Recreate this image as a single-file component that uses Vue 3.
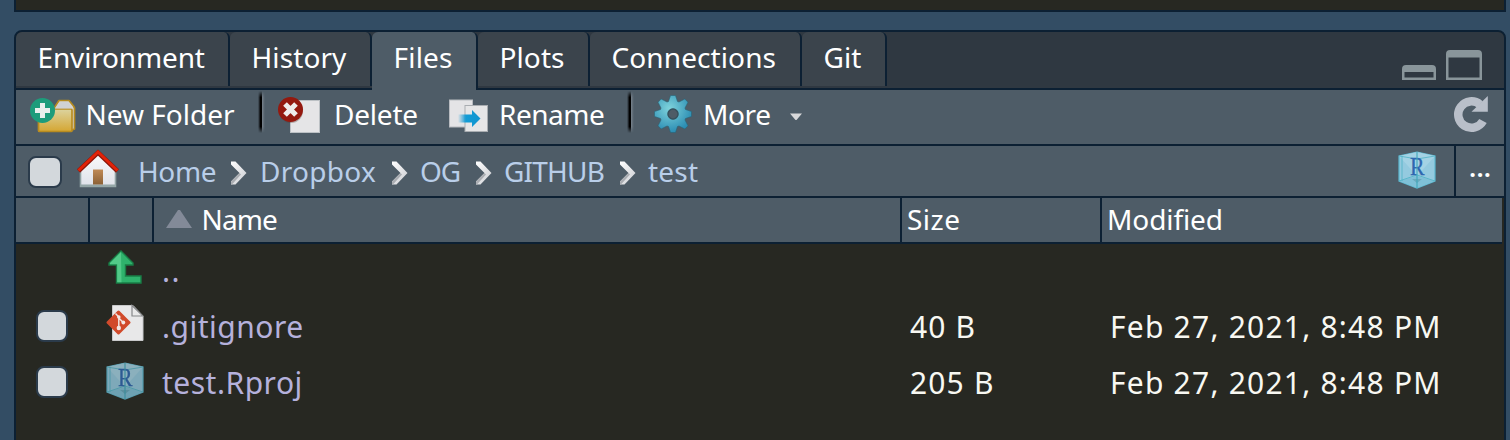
<script setup>
const tabs = [
  { label: 'Environment', cls: 't-env' },
  { label: 'History', cls: 't-history' },
  { label: 'Files', cls: 't-files active' },
  { label: 'Plots', cls: 't-plots' },
  { label: 'Connections', cls: 't-conn' },
  { label: 'Git', cls: 't-git' },
]
const crumbs = [
  { label: 'Home', cls: 'c-home' },
  { label: 'Dropbox', cls: 'c-dropbox' },
  { label: 'OG', cls: 'c-og' },
  { label: 'GITHUB', cls: 'c-github' },
  { label: 'test', cls: 'c-test' },
]
const rows = [
  { icon: 'up', name: '..', size: '', modified: '' },
  { icon: 'git', name: '.gitignore', size: '40 B', modified: 'Feb 27, 2021, 8:48 PM' },
  { icon: 'rproj', name: 'test.Rproj', size: '205 B', modified: 'Feb 27, 2021, 8:48 PM' },
]
</script>

<template>
  <div class="screen">
    <svg class="defs" width="0" height="0">
      <defs>
        <linearGradient id="folder" x1="0" y1="0" x2="0" y2="1"><stop offset="0" stop-color="#dcd4a0" /><stop offset="1" stop-color="#d5a632" /></linearGradient>
        <linearGradient id="move" x1="0" y1="0" x2="1" y2="0"><stop offset="0" stop-color="#1b9bd4" stop-opacity="0" /><stop offset=".35" stop-color="#149cd5" /><stop offset="1" stop-color="#1094cf" /></linearGradient>
        <radialGradient id="gear" cx=".4" cy=".35" r=".65"><stop offset="0" stop-color="#7fd3dc" /><stop offset="1" stop-color="#2b8db3" /></radialGradient>
        <linearGradient id="wall" x1="0" y1="0" x2="0" y2="1"><stop offset="0" stop-color="#fafafa" /><stop offset="1" stop-color="#dfe2ea" /></linearGradient>
        <linearGradient id="door" x1="0" y1="0" x2="0" y2="1"><stop offset="0" stop-color="#c08a56" /><stop offset="1" stop-color="#8b6136" /></linearGradient>
        <linearGradient id="chev" x1="0" y1="0" x2="1" y2="1"><stop offset="0" stop-color="#ffffff" /><stop offset="1" stop-color="#c9cbd0" /></linearGradient>
        <symbol id="cube" viewBox="0 0 38 38">
          <path d="M19 1 37 5V30L19 37 1 30V5Z" fill="#94cadf" stroke="#5cb8d0" stroke-width="1.2" />
          <path d="M19 1 37 5 19 25 1 5Z" fill="#a4d2e4" />
          <path d="M1 30 19 25 37 30 19 37Z" fill="#7fc0d7" />
          <path d="M1 5 19 8 37 5M1 30 19 24 37 30M4 5V30" fill="none" stroke="#4eb3c5" stroke-width=".8" />
          <path d="M14 28h10l-5 4Z" fill="#6aa9bd" />
          <text x="19.2" y="23.500" text-anchor="middle" font-family="Liberation Serif, serif" font-size="25" textLength="14.500" lengthAdjust="spacingAndGlyphs" fill="#2f67b0" stroke="#2f67b0" stroke-width=".3">R</text>
          <path d="M19 1V37" stroke="#3fa8bb" stroke-width="1.100" />
        </symbol>
      </defs>
    </svg>

    <div class="upper-pane"></div>

    <div class="pane">
      <div class="tabbar">
        <div v-for="t in tabs" :key="t.label" class="tab" :class="t.cls"><span>{{ t.label }}</span></div>
        <div class="window-controls">
          <svg width="34" height="30" viewBox="0 0 34 30"><path fill-rule="evenodd" fill="#89959a" d="M0 30V19q0-4 4-4H30q4 0 4 4V30ZM2.500 22V27.500H31.500V22Z" /></svg>
          <svg width="36" height="30" viewBox="0 0 36 30"><path fill-rule="evenodd" fill="#89959a" d="M0 30V4q0-4 4-4H32q4 0 4 4V30ZM2.500 7.500V27.500H33.500V7.500Z" /></svg>
        </div>
      </div>

      <div class="toolbar">
        <svg class="i-new" width="48" height="38" viewBox="0 0 48 38">
          <path d="M23.500 12 29 3.500h10l4.500 5.500 1 2V32l-2.500 1H24Z" fill="#d6d6d4" stroke="#b58b20" stroke-width="1.700" stroke-linejoin="round" />
          <rect x="8.500" y="12" width="33.500" height="22.500" rx="1" fill="url(#folder)" stroke="#b98c20" stroke-width="1.700" />
          <path d="M25 11.500 29.500 5h9l3.500 6.500Z" fill="#d0d1d3" />
          <circle cx="12.500" cy="13.500" r="12.500" fill="#1d9c7b" />
          <path d="M10 6h5v5h5v5h-5v5h-5v-5h-5v-5h5Z" fill="#e9efec" />
        </svg>
        <span class="l-new">New Folder</span>
        <i class="sep"></i>
        <svg class="i-del" width="46" height="38" viewBox="0 0 46 38">
          <rect x="13.500" y="4.500" width="29" height="32" fill="#e5e5e7" stroke="#bcc1c5" />
          <circle cx="14" cy="15" r="12" fill="#50352f" opacity=".35" />
          <circle cx="13.500" cy="13.500" r="12.500" fill="#94190f" />
          <path d="M8 8 19 19M19 8 8 19" stroke="#eeeceb" stroke-width="5.200" />
        </svg>
        <span class="l-del">Delete</span>
        <svg class="i-ren" width="42" height="38" viewBox="0 0 42 38">
          <rect x="1.500" y="4" width="23" height="27" fill="#e4e4e6" stroke="#b8bbc0" />
          <rect x="17" y="9.500" width="22.500" height="26" fill="#e6e6e7" stroke="#a9adb1" />
          <path d="M10 18.500H24V14l8.500 8.500-8.500 8.500v-4.500H10Z" fill="url(#move)" />
        </svg>
        <span class="l-ren">Rename</span>
        <i class="sep sep2"></i>
        <svg class="i-gear" width="40" height="40" viewBox="-20 -20 40 40">
          <path fill="url(#gear)" stroke="#2a6376" stroke-width=".6" fill-rule="evenodd" d="M-4.500-12.500-2.500-18.500H2.500L4.500-12.500 6-12 11.800-15 15-11.800 12-6 12.500-4.500 18.500-2.500V2.500L12.500 4.500 12 6 15 11.800 11.800 15 6 12 4.500 12.500 2.500 18.500H-2.500L-4.500 12.500-6 12-11.800 15-15 11.800-12 6-12.500 4.500-18.500 2.500V-2.500L-12.500-4.500-12-6-15-11.800-11.800-15-6-12ZM5 0A5 5 0 1 0-5 0 5 5 0 1 0 5 0Z" />
          <circle r="5" fill="none" stroke="#38515d" stroke-width="1.400" />
        </svg>
        <span class="l-more">More</span>
        <svg class="i-caret" width="14" height="8" viewBox="0 0 14 8"><path d="M1 .5H13L7.500 7h-1Z" fill="#d8d8da" /></svg>
        <svg class="i-refresh" width="36" height="38" viewBox="0 0 36 38">
          <path d="M30 26A13.200 13.200 0 1 1 27 9.500" fill="none" stroke="#b9bfc9" stroke-width="8.500" />
          <path d="M18.500 16.800 34.800 1V16.800Z" fill="#b9bfc9" />
        </svg>
      </div>

      <div class="pathbar">
        <i class="check check-all"></i>
        <svg class="i-home" width="44" height="40" viewBox="0 0 44 40">
          <path d="M4.500 21 22 4.500 39.500 21V37.500H4.500Z" fill="url(#wall)" />
          <path d="M4.500 20V37.500H39.500V20" fill="none" stroke="#92a3a5" stroke-width="1.600" />
          <path d="M4 36.700H40" stroke="#94a6a7" stroke-width="2.500" />
          <rect x="17" y="20.500" width="10" height="15" fill="url(#door)" />
          <path d="M2.500 22 22 3.500 41.500 22" fill="none" stroke="#8b170b" stroke-width="4.500" />
          <path d="M2.500 21.500 22 3 41.500 21.500" fill="none" stroke="#e12308" stroke-width="3" />
        </svg>
        <template v-for="(c, i) in crumbs" :key="c.label">
          <svg v-if="i" class="chevron" width="16" height="24" viewBox="0 0 16 24">
            <path d="M0 3.500 8.500 12 0 20.500V23.500H4.500L15.500 12 4.500 .5H0Z" fill="url(#chev)" />
            <path d="M0 20.500 8.500 12 10 13.500 1 23.500H0Z" fill="#aaadb2" />
          </svg>
          <span class="crumb" :class="c.cls">{{ c.label }}</span>
        </template>
        <svg class="i-project" width="38" height="38"><use href="#cube" /></svg>
        <div class="more-cell"><span>...</span></div>
      </div>

      <div class="header grid">
        <div></div>
        <div></div>
        <div class="h-name">
          <svg width="26" height="18" viewBox="0 0 26 18"><path d="M12 0h2L26 18H0Z" fill="#838a98" /></svg>
          <span>Name</span>
        </div>
        <div class="h-size"><span>Size</span></div>
        <div class="h-mod"><span>Modified</span></div>
      </div>

      <div v-for="r in rows" :key="r.name" class="row grid" :class="r.icon">
        <div class="cell-check"><i v-if="r.size" class="check"></i></div>
        <div class="cell-icon">
          <svg v-if="r.icon === 'up'" width="34" height="34" viewBox="0 0 34 34">
            <path d="M13 1 25 13V15H17.500V26H33V33H8.500V15H1V13Z" fill="#2fb26c" stroke="#197d46" stroke-width="1.400" />
            <path d="M13 2 2 13V14.300H9.200V32.300H13.500Z" fill="#52c988" />
          </svg>
          <svg v-else-if="r.icon === 'git'" width="38" height="38" viewBox="0 0 38 38">
            <path d="M6.500 1.500H27L37 12V36.500H6.500Z" fill="#e8e8e9" stroke="#c8c9ca" />
            <path d="M26 1.500V12H37Z" fill="#e9e9e9" stroke="#86888a" stroke-width="1.200" />
            <rect x="3.600" y="9.600" width="17.800" height="17.800" rx="1.500" fill="#d14a2b" transform="rotate(45 12.500 18.500)" />
            <path d="M9.500 9.500 12.800 13V24M12.800 14 17 18.200" fill="none" stroke="#f1e3df" stroke-width="1.500" />
            <g fill="#f3e7e4"><circle cx="12.800" cy="13" r="1.800" /><circle cx="12.800" cy="24" r="2.200" /><circle cx="17.300" cy="18.500" r="1.900" /></g>
          </svg>
          <svg v-else class="dim" width="38" height="38"><use href="#cube" /></svg>
        </div>
        <div class="cell-name"><span>{{ r.name }}</span></div>
        <div class="cell-size"><span>{{ r.size }}</span></div>
        <div class="cell-mod"><span>{{ r.modified }}</span></div>
      </div>
    </div>
  </div>
</template>

<style>
body { margin: 0; background: #334d64; }
</style>

<style scoped>
.screen { box-sizing: border-box; width: 1510px; height: 440px; padding-left: 14px; overflow: hidden; background: #334d64; font: 28px/50px "Noto Sans", sans-serif; color: #fff; white-space: nowrap; }
.screen * { box-sizing: border-box; }
.screen svg { display: block; flex: none; }
.screen .defs { position: absolute; }
.upper-pane { width: 1492px; height: 12px; border: solid #0c2033; border-width: 0 2px 2px; background: #272822; }
.pane { width: 1492px; height: 430px; margin-top: 18px; border: 2px solid #0c2033; border-radius: 8px 8px 0 0; background: #272822; overflow: hidden; }

.tabbar { display: flex; height: 58px; border-bottom: 2px solid #0c2033; background: #2f3841; }
.tab { flex: none; height: 54px; padding-left: 21.5px; border-right: 2px solid #0c2033; border-radius: 6px 6px 0 0; background: #3b444c; letter-spacing: .1px; }
.tab.active { height: 58px; background: #4e5c67; }
.t-env { width: 214px; letter-spacing: -.15px; }
.t-history { width: 142px; }
.t-files { width: 106px; letter-spacing: .2px; }
.t-plots { width: 112px; }
.t-conn { width: 212px; }
.t-git { width: 85px; }
.window-controls { display: flex; gap: 10px; margin: 18px 22px 0 auto; }

.toolbar { display: flex; height: 56px; border-bottom: 2px solid #0c2033; background: #4e5c67; line-height: 48px; }
.toolbar span { flex: none; }
.i-new { margin: 7px 0 0 14px; }
.l-new { width: 180px; padding-left: 7.5px; }
.sep { flex: none; width: 7px; height: 42px; margin-top: 1px; background: linear-gradient(90deg, transparent, #000 35%, #000 50%, #75808a 60%, transparent); -webkit-mask: linear-gradient(transparent, #000 15%, #000 85%, transparent); mask: linear-gradient(transparent, #000 15%, #000 85%, transparent); }
.i-del { margin: 6px 0 0 12px; }
.l-del { width: 125px; padding-left: 11px; letter-spacing: -.2px; }
.i-ren { margin: 6px 0 0 0; }
.l-ren { width: 137px; padding-left: 9px; letter-spacing: -.5px; }
.i-gear { margin: 4px 0 0 19px; }
.l-more { width: 96px; padding-left: 10px; letter-spacing: -.4px; }
.i-caret { margin-top: 23px; }
.i-refresh { margin: 5px 15px 0 auto; }

.pathbar { display: flex; height: 52px; border-bottom: 2px solid #0c2033; background: #4e5c67; }
.check { display: block; flex: none; width: 32px; height: 32px; border: 2px solid #2b3b4b; border-radius: 8px; background: #d3d8dc; }
.check-all { width: 34px; margin: 10px 0 0 12px; }
.i-home { margin: 3px 0 0 14px; }
.crumb { flex: none; color: #b9cee9; }
.chevron { margin: 15px 0 0; }
.c-home { width: 111px; padding-left: 18px; letter-spacing: -.4px; }
.c-dropbox { width: 145px; padding-left: 13px; letter-spacing: .3px; }
.c-og { width: 68px; padding-left: 12px; letter-spacing: -1.2px; }
.c-github { width: 128px; padding-left: 12px; letter-spacing: -.8px; }
.c-test { padding-left: 12px; letter-spacing: .2px; }
.i-project { margin: 5px 18px 0 auto; }
.more-cell { width: 50px; height: 50px; border-left: 2px solid #0c2033; padding-left: 13px; font-weight: 600; font-size: 26px; line-height: 43px; letter-spacing: .2px; }

.grid { display: grid; grid-template-columns: 74px 64px 748px 200px 1fr; }
.header { width: 1486px; height: 46px; border-bottom: 2px solid #0c2033; background: #4e5c67; line-height: 43px; }
.header > div:not(:last-child) { border-right: 2px solid #0c2033; }
.h-name { display: flex; gap: 9.5px; padding-left: 12px; letter-spacing: -.9px; }
.h-name svg { margin-top: 12px; }
.h-size { padding-left: 5px; letter-spacing: .5px; }
.h-mod { padding-left: 5px; letter-spacing: -.1px; }

.row { height: 56px; font-size: 30px; line-height: 58px; color: #f8f8f2; }
.row.up { height: 54px; line-height: 54px; }
.cell-check { padding: 12px 0 0 20px; }
.cell-icon { padding: 6px 0 0 18px; }
.git .cell-icon { padding: 6px 0 0 16px; }
.rproj .cell-icon { padding: 8px 0 0 16px; }
.dim { opacity: .8; }
.cell-name { padding-left: 8px; color: #b5b1dc; letter-spacing: .5px; }
.up .cell-name { letter-spacing: 1.5px; }
.cell-size { padding-left: 8px; letter-spacing: 1.15px; }
.cell-mod { padding-left: 8px; letter-spacing: 1.22px; }
</style>
